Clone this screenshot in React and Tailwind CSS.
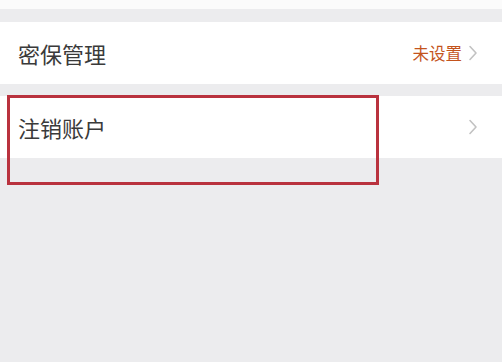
const font = { fontFamily: '"Noto Sans CJK SC", "Noto Sans", sans-serif' };

function Chevron() {
  return (
    <svg width="10" height="16" viewBox="0 0 10 16" fill="none">
      <path d="M2 1.5 L8 8 L2 14.5" stroke="#c2c2c2" strokeWidth="1.6" strokeLinecap="round" strokeLinejoin="round" />
    </svg>
  );
}

function Row({ label, value }) {
  return (
    <div className="flex items-center justify-between h-[62px] bg-white pl-[18px] pr-[24px]">
      <span className="text-[22px] text-[#3a3a3a] leading-none">{label}</span>
      <div className="flex items-center gap-[6px]">
        {value && <span className="text-[16.5px] text-[#c4541d] leading-none">{value}</span>}
        <Chevron />
      </div>
    </div>
  );
}

export default function App() {
  return (
    <div className="relative w-[502px] h-[362px] bg-[#ececee] overflow-hidden" style={font}>
      <div className="h-[9px] bg-[#fbfbfb]" />
      <div className="h-[13px]" />
      <Row label="密保管理" value="未设置" />
      <div className="h-[12px]" />
      <Row label="注销账户" />

      {/* 红框标注 */}
      <div className="absolute left-[7px] top-[95px] w-[372px] h-[90px] border-[3px] border-[#b9323e] pointer-events-none" />
    </div>
  );
}
